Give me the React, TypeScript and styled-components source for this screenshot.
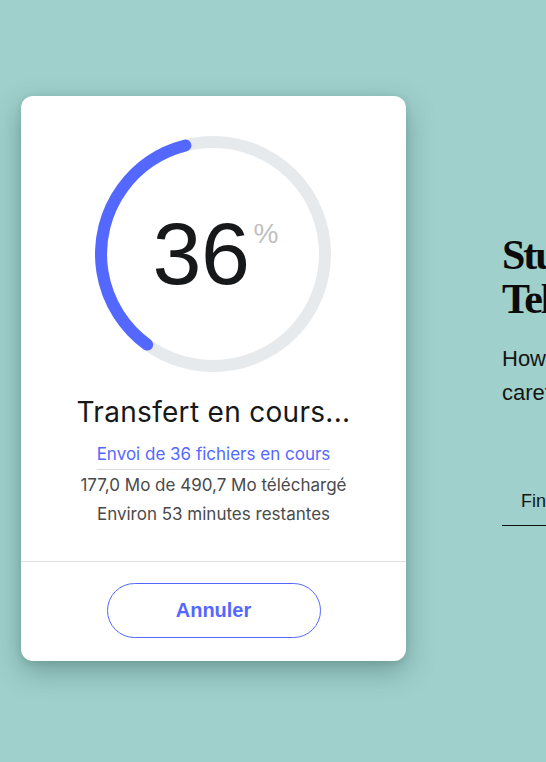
import React from "react";
import styled, { createGlobalStyle } from "styled-components";

const Global = createGlobalStyle`
  html, body { margin: 0; padding: 0; }
  body {
    background: #9fd0cb;
    overflow: hidden;
    font-family: Inter, "Liberation Sans", sans-serif;
  }
`;

const Page = styled.div`
  width: 546px;
  height: 762px;
  display: flex;
  align-items: flex-start;
  padding: 96px 0 0 21px;
  box-sizing: border-box;
  overflow: hidden;
`;

const Card = styled.div`
  flex: none;
  width: 385px;
  background: #fff;
  border-radius: 12px;
  box-shadow: 0 10px 28px rgba(40, 80, 76, 0.38), 0 2px 6px rgba(40, 80, 76, 0.15);
  display: flex;
  flex-direction: column;
  align-items: center;
`;

const Body = styled.div`
  display: flex;
  flex-direction: column;
  align-items: center;
  padding: 40px 0 32px;
`;

const Ring = styled.div`
  position: relative;
  width: 236px;
  height: 236px;
`;

const Center = styled.div`
  position: absolute;
  inset: 0;
  display: flex;
  align-items: center;
  justify-content: center;
  padding-left: 4px;
`;

const Number = styled.span`
  font-family: "Liberation Sans", Arial, sans-serif;
  font-size: 88px;
  line-height: 1;
  color: #17181a;
  letter-spacing: -0.5px;
`;

const Percent = styled.sup`
  font-family: "Liberation Sans", Arial, sans-serif;
  font-size: 28px;
  color: #bfc0c4;
  align-self: flex-start;
  margin-top: 84px;
  margin-left: 4px;
  line-height: 1;
`;

const Title = styled.h1`
  margin: 22px 0 0;
  font-weight: 400;
  font-size: 28px;
  line-height: 36px;
  color: #17181a;
  letter-spacing: 0.3px;
`;

const Status = styled.span`
  margin-top: 12px;
  font-size: 17px;
  line-height: 25px;
  color: #5468ff;
  padding-bottom: 2px;
  border-bottom: 1px solid #d9d9d9;
`;

const Info = styled.p`
  margin: 0;
  font-size: 17px;
  line-height: 29px;
  color: #4a4a4a;
  &:first-of-type {
    margin-top: 1px;
  }
`;

const Footer = styled.div`
  align-self: stretch;
  border-top: 1px solid #e0e0e0;
  display: flex;
  justify-content: center;
  padding: 21px 0 23px;
`;

const CancelButton = styled.button`
  width: 214px;
  height: 55px;
  border-radius: 28px;
  border: 1px solid #5468ff;
  background: #fff;
  color: #5468ff;
  font-family: "Liberation Sans", Arial, sans-serif;
  font-weight: 700;
  font-size: 20px;
  cursor: pointer;
`;

const Side = styled.div`
  flex: none;
  margin-left: 96px;
  padding-top: 137px;
  width: 420px;
  white-space: nowrap;
`;

const Heading = styled.h2`
  margin: 0;
  font-family: "Liberation Serif", "Times New Roman", serif;
  font-weight: 700;
  font-size: 42px;
  line-height: 44px;
  color: #0b0b0b;
  letter-spacing: -2px;
`;

const Lead = styled.p`
  margin: 21px 0 0;
  font-family: "Liberation Sans", Arial, sans-serif;
  font-size: 22px;
  line-height: 34px;
  color: #151515;
`;

const LinkRow = styled.div`
  margin-top: 79px;
  width: 200px;
  border-bottom: 1px solid #111;
  padding: 0 0 12px 19px;
  font-family: "Liberation Sans", Arial, sans-serif;
  font-size: 18px;
  line-height: 24px;
  color: #151515;
`;

const R = 112;
const C = 2 * Math.PI * R;
const progress = 0.36;

export default function App() {
  return (
    <>
      <Global />
      <Page>
        <Card>
          <Body>
            <Ring>
              <svg width="236" height="236" viewBox="0 0 236 236">
                <circle cx="118" cy="118" r={R} fill="none" stroke="#e7eaed" strokeWidth="12" />
                <circle
                  cx="118"
                  cy="118"
                  r={R}
                  fill="none"
                  stroke="#5468ff"
                  strokeWidth="12"
                  strokeLinecap="round"
                  strokeDasharray={`${progress * C} ${C}`}
                  transform="rotate(126 118 118)"
                />
              </svg>
              <Center>
                <Number>36</Number>
                <Percent>%</Percent>
              </Center>
            </Ring>
            <Title>Transfert en cours...</Title>
            <Status>Envoi de 36 fichiers en cours</Status>
            <Info>177,0 Mo de 490,7 Mo téléchargé</Info>
            <Info>Environ 53 minutes restantes</Info>
          </Body>
          <Footer>
            <CancelButton>Annuler</CancelButton>
          </Footer>
        </Card>
        <Side>
          <Heading>
            Stuck with
            <br />
            Telling stories
          </Heading>
          <Lead>
            How we think about
            <br />
            careful transfers
          </Lead>
          <LinkRow>Find out more</LinkRow>
        </Side>
      </Page>
    </>
  );
}
